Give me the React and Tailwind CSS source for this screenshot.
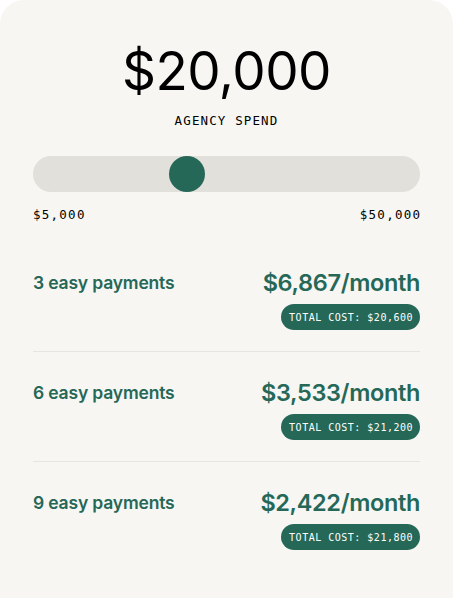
import React from "react";

const rows = [
  { n: 3, price: "$6,867/month", total: "$20,600" },
  { n: 6, price: "$3,533/month", total: "$21,200" },
  { n: 9, price: "$2,422/month", total: "$21,800" },
];

const mono = { fontFamily: '"DejaVu Sans Mono", "Liberation Mono", monospace' };

export default function App() {
  return (
    <div className="w-[454px] h-[598px] bg-white overflow-hidden" style={{ fontFamily: 'Inter, "Liberation Sans", sans-serif' }}>
      <div className="w-[453px] h-[598px] bg-[#f7f6f3] rounded-t-[24px] px-[33px] pt-[41px]">
        <div className="text-center text-[53px] leading-[60px] font-normal text-black tracking-[-0.01em]">$20,000</div>
        <div className="mt-[12px] text-center text-[12.5px] leading-[16px] tracking-[0.09em] text-black" style={mono}>
          AGENCY SPEND
        </div>
        <div className="mt-[27px] relative h-[36px] rounded-full bg-[#e1e0db]">
          <div className="absolute left-[136px] top-0 w-[36px] h-[36px] rounded-full bg-[#256858]" />
        </div>
        <div className="mt-[15px] flex justify-between text-[12.5px] leading-[16px] tracking-[0.1em] text-black" style={mono}>
          <span>$5,000</span>
          <span className="-mr-[1.25px]">$50,000</span>
        </div>
        <div className="mt-[19px]">
          {rows.map((r, i) => (
            <div
              key={r.n}
              className={`flex justify-between items-start pt-[27px] pb-[21px] ${i < 2 ? "border-b border-[#e6e5e0]" : ""}`}
            >
              <div className="text-[17.5px] leading-[28px] font-semibold text-[#256858] tracking-[-0.01em]">
                {r.n} easy payments
              </div>
              <div className="flex flex-col items-end">
                <div className="text-[23.5px] leading-[28px] font-semibold text-[#256858] tracking-[-0.015em]">{r.price}</div>
                <div
                  className="mt-[7px] h-[26px] pl-[8px] pr-[7px] flex items-center rounded-full bg-[#256858] text-white text-[10px] tracking-[0.05em]"
                  style={mono}
                >
                  TOTAL COST: {r.total}
                </div>
              </div>
            </div>
          ))}
        </div>
      </div>
    </div>
  );
}
